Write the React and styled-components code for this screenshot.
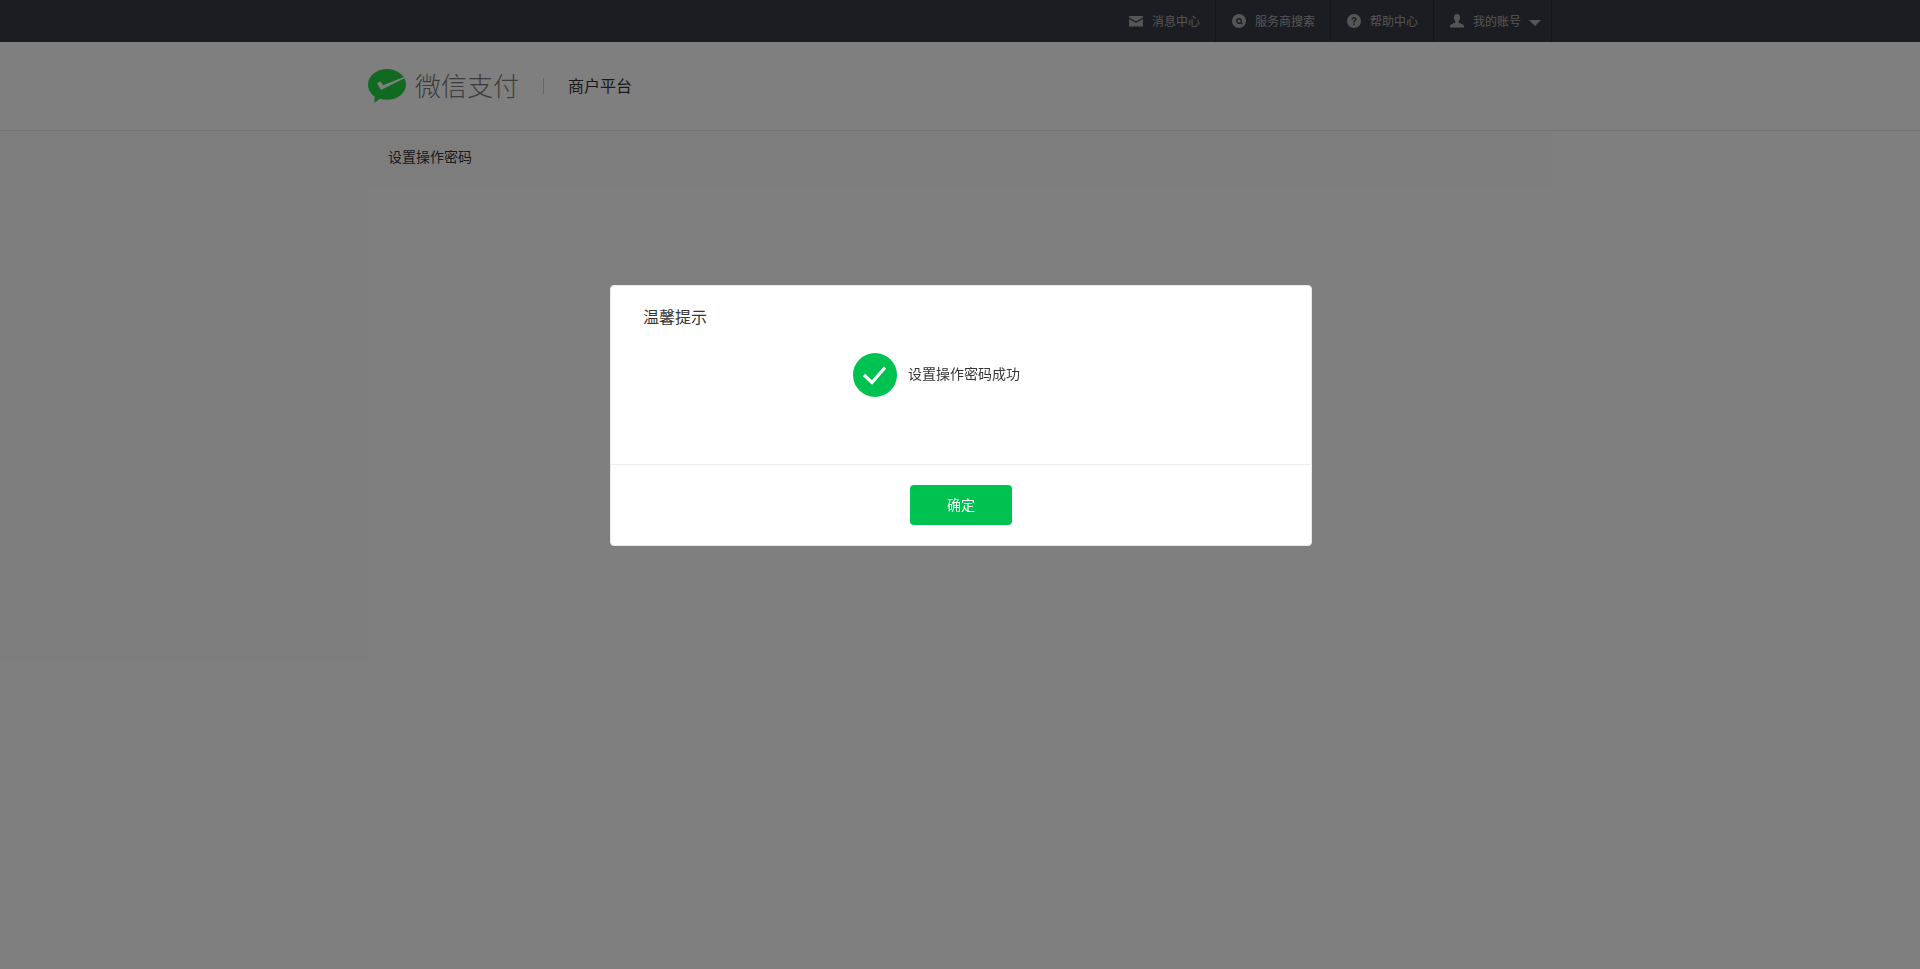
import React from "react"
import styled, { createGlobalStyle } from "styled-components"

const GlobalStyle = createGlobalStyle`
  html, body {
    margin: 0;
    padding: 0;
    background: #fff;
    font-family: "Noto Sans CJK SC", "Liberation Sans", sans-serif;
  }
`

const Page = styled.div`
  height: 969px;
  overflow: hidden;
`

const TopBar = styled.div`
  height: 42px;
  background: #393b44;
`

const TopInner = styled.div`
  width: 1184px;
  height: 100%;
  margin: 0 auto;
  display: flex;
  justify-content: flex-end;
`

const NavItem = styled.a`
  display: flex;
  align-items: center;
  gap: 9px;
  padding: 0 ${(p) => p.$right || 15}px 0 16px;
  border-right: 1px solid #2a2b32;
  color: #aaa;
  font-size: 12px;
`

const NavLabel = styled.span`
  padding-bottom: 2px;
`

const NavIcon = styled.svg`
  width: 14px;
  height: 14px;
  fill: #aaa;
  flex: none;
`

const Caret = styled.i`
  width: 0;
  height: 0;
  margin: 4px 0 0 -1px;
  border-style: solid;
  border-width: 6px 6px 0;
  border-color: #aaa transparent transparent;
`

const Header = styled.div`
  height: 88px;
  background: #fff;
  border-bottom: 1px solid #e8e8e8;
`

const HeaderInner = styled.div`
  width: 1184px;
  height: 100%;
  margin: 0 auto;
  display: flex;
  align-items: center;
`

const Brand = styled.span`
  margin-left: 9px;
  padding-bottom: 2px;
  font-size: 26px;
  font-weight: 300;
  line-height: 34px;
  color: #7a7a7a;
`

const BrandLine = styled.i`
  width: 1px;
  height: 16px;
  margin: 0 24px 0 24px;
  background: #ccc;
`

const Platform = styled.span`
  padding-bottom: 3px;
  font-size: 16px;
  color: #353535;
`

const Body = styled.div`
  height: 530px;
  display: flex;
  justify-content: flex-start;
`

const Aside = styled.div`
  width: 368px;
  background: #fbfbfb;
`

const Content = styled.div`
  width: 1184px;
  height: 100%;
  background: #fff;
`

const Crumb = styled.div`
  height: 50px;
  padding: 0 0 4px 20px;
  display: flex;
  align-items: center;
  background: #fbfbfb;
  font-size: 14px;
  color: #353535;
`

const Overlay = styled.div`
  position: fixed;
  inset: 0;
  background: rgba(0, 0, 0, 0.5);
  display: flex;
  justify-content: center;
  align-items: flex-start;
  padding: 285px 0 0 2px;
`

const Dialog = styled.div`
  width: 702px;
  height: 261px;
  box-sizing: border-box;
  display: flex;
  flex-direction: column;
  background: #fff;
  border: 1px solid #eaeaea;
  border-radius: 4px;
`

const DialogBody = styled.div`
  flex: 1;
  padding: 19px 32px 0;
`

const DialogTitle = styled.h3`
  margin: 0;
  font-size: 16px;
  line-height: 22px;
  font-weight: 400;
  color: #353535;
`

const Result = styled.div`
  display: flex;
  align-items: center;
  gap: 11px;
  margin: 26px 0 0 210px;
  font-size: 14px;
  color: #353535;
`

const ResultText = styled.span`
  padding-bottom: 4px;
`

const DialogFooter = styled.div`
  height: 80px;
  border-top: 1px solid #eeeef0;
  display: flex;
  justify-content: center;
  align-items: center;
`

const OkButton = styled.button`
  width: 102px;
  height: 40px;
  padding: 0 0 2px;
  border: 0;
  border-radius: 4px;
  background: #00c250;
  color: #fff;
  font: 400 14px "Noto Sans CJK SC", sans-serif;
`

const MailIcon = () => (
  <NavIcon viewBox="0 0 14 14">
    <path d="M0 2h14v1.600L7 7.400 0 3.600z" />
    <path d="M0 5l7 3.800L14 5v7.500H0z" />
  </NavIcon>
)

const SearchIcon = () => (
  <NavIcon viewBox="0 0 14 14">
    <path
      fillRule="evenodd"
      d="M7 0a7 7 0 1 1 0 14A7 7 0 0 1 7 0zm0 4a3 3 0 1 0 1.600 5.500l1.200 1 .9-1-1.100-1A3 3 0 0 0 7 4zm0 1.400a1.600 1.600 0 1 1 0 3.200 1.600 1.600 0 0 1 0-3.200z"
    />
  </NavIcon>
)

const HelpIcon = () => (
  <NavIcon viewBox="0 0 14 14">
    <path
      fillRule="evenodd"
      d="M7 0a7 7 0 1 1 0 14A7 7 0 0 1 7 0zM4.600 5.400h1.500c0-.7.4-1.100 1-1.100s.9.3.9.8c0 .4-.2.7-.7 1.100-.7.6-1 1-1 1.900v.3h1.400v-.2c0-.5.2-.8.7-1.200.7-.6 1.100-1.100 1.100-2 0-1.400-1-2.100-2.400-2.100-1.500 0-2.500.9-2.500 2.500zm1.600 4.100v1.500h1.600V9.500z"
    />
  </NavIcon>
)

const UserIcon = () => (
  <NavIcon viewBox="0 0 14 14">
    <path d="M7 0c1.900 0 3 1.400 3 3.400 0 1.500-.6 3-1.400 3.800v1.300c0 .6 5.400 1.500 5.400 3.500v1.500H0v-1.500c0-2 5.400-2.900 5.400-3.500V7.200C4.600 6.400 4 4.900 4 3.400 4 1.400 5.100 0 7 0z" />
  </NavIcon>
)

const Logo = () => (
  <svg width="38" height="34" viewBox="0 0 38 34">
    <path
      d="M19 0c10.500 0 19 6.900 19 15.400S29.500 30.800 19 30.800c-2.500 0-4.900-.4-7.100-1.100L6.300 34l.4-6.500C2.600 24.700 0 20.300 0 15.400 0 6.900 8.500 0 19 0z"
      fill="#24d444"
    />
    <path d="M9 14l3.500-1.500L15 16.200 36 8l1 1-24 12z" fill="#fff" />
  </svg>
)

const CheckBadge = () => (
  <svg width="44" height="44" viewBox="0 0 44 44">
    <circle cx="22" cy="22" r="22" fill="#00c250" />
    <path
      d="M11 22l8 7.500L32 14.500"
      fill="none"
      stroke="#fff"
      strokeWidth="3.200"
    />
  </svg>
)

const App = () => {
  return (
    <Page>
      <GlobalStyle />
      <TopBar>
        <TopInner>
          <NavItem>
            <MailIcon />
            <NavLabel>消息中心</NavLabel>
          </NavItem>
          <NavItem>
            <SearchIcon />
            <NavLabel>服务商搜索</NavLabel>
          </NavItem>
          <NavItem>
            <HelpIcon />
            <NavLabel>帮助中心</NavLabel>
          </NavItem>
          <NavItem $right={10}>
            <UserIcon />
            <NavLabel>我的账号</NavLabel>
            <Caret />
          </NavItem>
        </TopInner>
      </TopBar>
      <Header>
        <HeaderInner>
          <Logo />
          <Brand>微信支付</Brand>
          <BrandLine />
          <Platform>商户平台</Platform>
        </HeaderInner>
      </Header>
      <Body>
        <Aside />
        <Content>
          <Crumb>设置操作密码</Crumb>
        </Content>
      </Body>
      <Overlay>
        <Dialog>
          <DialogBody>
            <DialogTitle>温馨提示</DialogTitle>
            <Result>
              <CheckBadge />
              <ResultText>设置操作密码成功</ResultText>
            </Result>
          </DialogBody>
          <DialogFooter>
            <OkButton>确定</OkButton>
          </DialogFooter>
        </Dialog>
      </Overlay>
    </Page>
  )
}

export default App
